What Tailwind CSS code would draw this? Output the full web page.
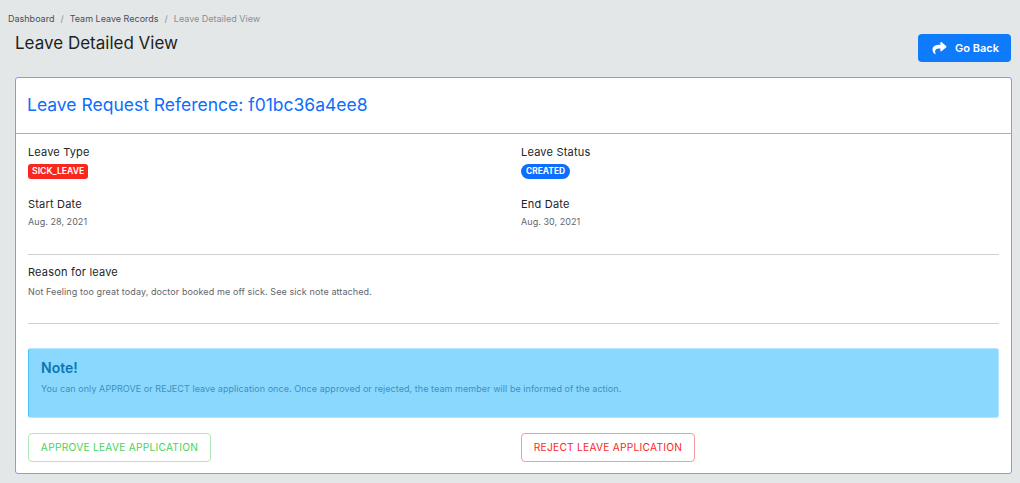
<!DOCTYPE html>
<html lang="en">
  <head>
    <meta charset="UTF-8" />
    <meta name="viewport" content="width=device-width, initial-scale=1.0" />
    <title>Leave Detailed View</title>
    <script src="https://cdn.jsdelivr.net/npm/@tailwindcss/browser@4"></script>
  </head>
  <body class="bg-[#e4e7e8] text-[#212529] font-['Inter',sans-serif] h-[483px] overflow-hidden">
    <!-- Breadcrumb -->
    <nav class="flex items-center h-[13px] mt-3 ml-2 text-[9px] leading-[13px]">
      <a href="#" class="text-[#4a4f54]">Dashboard</a>
      <span class="mx-[6px] text-[#8a9096]">/</span>
      <a href="#" class="text-[#4a4f54]">Team Leave Records</a>
      <span class="mx-[6px] text-[#8a9096]">/</span>
      <span class="text-[#868e96]">Leave Detailed View</span>
    </nav>

    <!-- Header -->
    <div class="flex justify-between items-start mt-[9px] ml-[15px] mr-[9px]">
      <h1 class="text-[17px] leading-[21px] mt-[-1px] text-[#1c1f23]">Leave Detailed View</h1>
      <button class="flex items-center w-[93px] h-[28px] pl-[14px] bg-[#0d7bfb] text-white text-[11px] font-semibold rounded-[4px]">
        <svg class="w-[15px] h-[14px]" viewBox="0 0 512 512" fill="currentColor">
          <path d="M503.7 189.8 327.7 37.9C312.3 24.6 288 35.4 288 56v80C127.4 137.8 0 170.1 0 322.8c0 61.6 39.7 122.7 83.6 154.6 13.7 10 33.2-2.5 28.1-18.7C66.2 313.3 133 274.7 288 272.4V360c0 20.7 24.3 31.4 39.7 18.2l176-152c11.1-9.6 11.1-26.8 0-36.4z" />
        </svg>
        <span class="ml-[8px]">Go Back</span>
      </button>
    </div>

    <!-- Card -->
    <main class="mt-[15px] mr-[8px] ml-[15px] h-[397px] bg-white border border-[#7c9cff] rounded-[3px]">
      <div class="h-[56px] px-[11px] flex items-center border-b border-[#94aefc]">
        <h2 class="text-[17.5px] text-[#0d6efd] mt-[-1px]">Leave Request Reference: f01bc36a4ee8</h2>
      </div>

      <div class="px-[12px]">
        <div class="grid grid-cols-[493px_1fr] pt-[11px]">
          <div class="h-[52px]">
            <h3 class="text-[11px] leading-[14px] tracking-[0.15px]">Leave Type</h3>
            <span class="block w-fit mt-[5px] h-[15px] px-[4px] bg-[#f8281f] text-white text-[8.7px] leading-[15px] font-semibold rounded-[3px]">SICK_LEAVE</span>
          </div>
          <div class="h-[52px]">
            <h3 class="text-[11px] leading-[14px] tracking-[0.2px]">Leave Status</h3>
            <span class="block w-fit mt-[5px] h-[15px] px-[5px] bg-[#0d6efd] text-white text-[8.4px] leading-[15px] font-bold rounded-full">CREATED</span>
          </div>
          <div>
            <h3 class="text-[11px] leading-[14px] tracking-[0.2px]">Start Date</h3>
            <p class="mt-[5px] text-[9px] leading-[12px] tracking-[0.05px] text-[#5f666d]">Aug. 28, 2021</p>
          </div>
          <div>
            <h3 class="text-[11px] leading-[14px] tracking-[0.2px]">End Date</h3>
            <p class="mt-[5px] text-[9px] leading-[12px] tracking-[0.05px] text-[#5f666d]">Aug. 30, 2021</p>
          </div>
        </div>

        <hr class="mt-[26px] border-[#cfd2d4]" />

        <h3 class="mt-[10px] text-[11px] leading-[14px] tracking-[0.2px]">Reason for leave</h3>
        <p class="mt-[7px] text-[9px] leading-[12px] tracking-[0.1px] text-[#5f666d]">Not Feeling too great today, doctor booked me off sick. See sick note attached.</p>

        <hr class="mt-[25px] border-[#cfd2d4]" />

        <!-- Note -->
        <div class="mt-[24px] h-[70px] pl-[12px] pt-[10px] bg-[#8bd8ff] border border-[#b5e5fd] border-l-[#4cc2fb] rounded-[3px]">
          <h4 class="text-[14px] leading-[18px] font-semibold text-[#0a77b3]">Note!</h4>
          <p class="mt-[6px] text-[9px] leading-[12px] tracking-[0.06px] text-[#3f8fc0]">You can only APPROVE or REJECT leave application once. Once approved or rejected, the team member will be informed of the action.</p>
        </div>

        <!-- Actions -->
        <div class="grid grid-cols-[493px_1fr] mt-[15px]">
          <div>
            <button class="w-[183px] h-[29px] border border-[#aeeab6] rounded-[4px] text-[#46d35c] text-[10.2px] tracking-[0.25px]">APPROVE LEAVE APPLICATION</button>
          </div>
          <div>
            <button class="w-[174px] h-[29px] border border-[#fb9a98] rounded-[4px] text-[#f8281f] text-[10.2px] tracking-[0.25px]">REJECT LEAVE APPLICATION</button>
          </div>
        </div>
      </div>
    </main>
  </body>
</html>
